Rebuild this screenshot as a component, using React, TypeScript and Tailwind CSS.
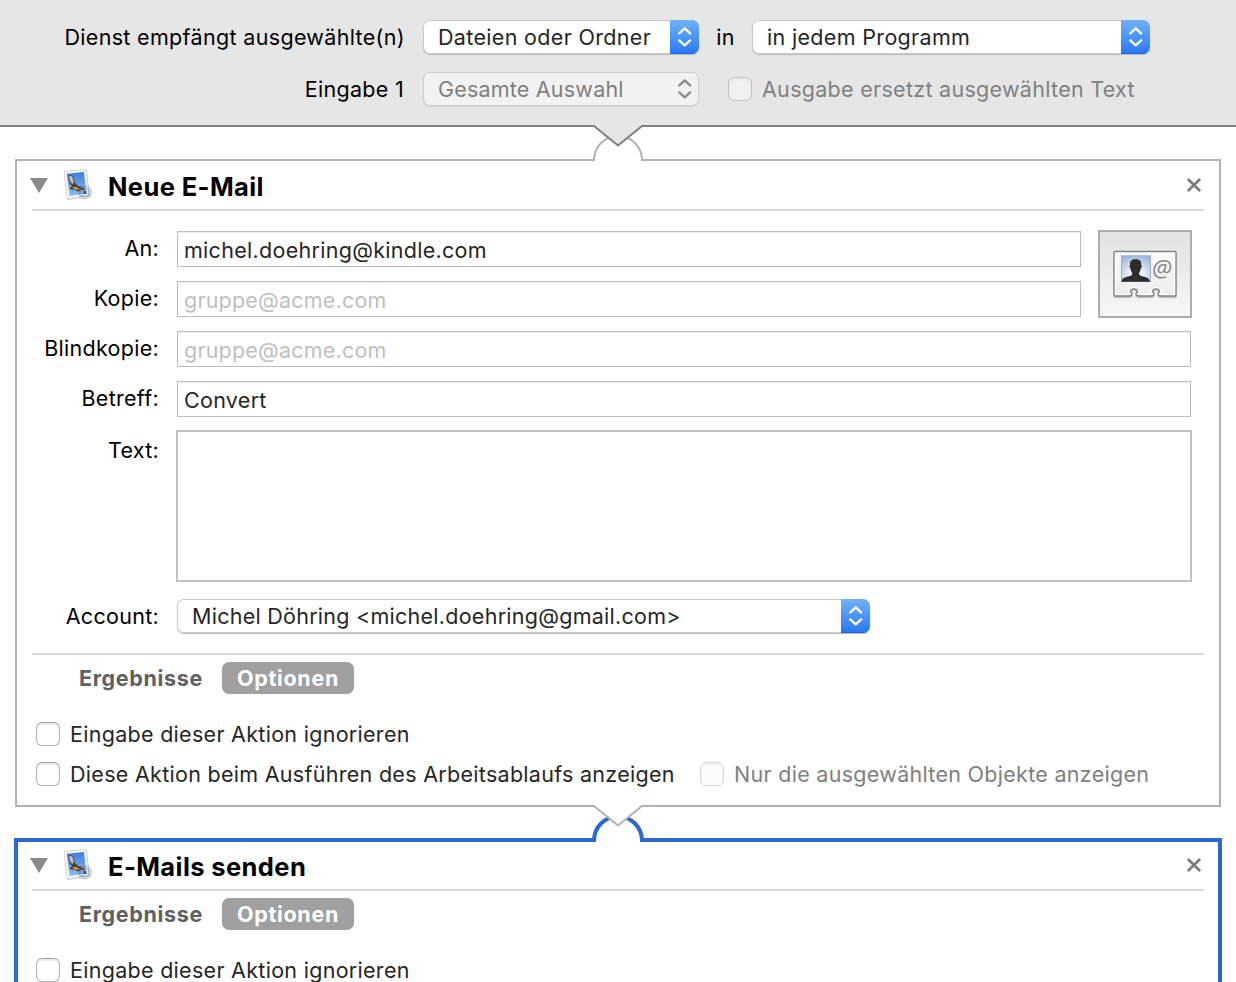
import type { ReactNode } from 'react';

function Chevrons({ className }: { className: string }) {
  return (
    <svg className={className} width="14" height="22" viewBox="0 0 14 22" fill="none" stroke="currentColor" strokeWidth="2.3" strokeLinecap="round" strokeLinejoin="round">
      <path d="M1.300 7.400 6.700 2.400l5.400 5" />
      <path d="M1.300 14.400 6.700 19.400l5.400-5" />
    </svg>
  );
}

function Select({ children, className, disabled = false }: { children: ReactNode; className: string; disabled?: boolean }) {
  return (
    <div
      className={`flex h-[34px] shrink-0 items-stretch overflow-hidden rounded-[7px] ${
        disabled
          ? 'bg-[#f2f2f2] text-[#7f7f7f] shadow-[inset_0_0_0_1px_#cdcdcd,0_1px_1px_#d2d2d2]'
          : 'bg-white text-[#262626] shadow-[inset_0_0_0_1px_#c9c9c9,0_1px_1px_#b9b9b9]'
      } ${className}`}
    >
      <div className="flex flex-1 items-center whitespace-nowrap pl-[15px]">{children}</div>
      <div
        className={`flex w-[29px] items-center justify-center ${
          disabled ? '' : 'bg-linear-to-b from-[#70b1f7] to-[#2777f6] shadow-[inset_0_-1px_0_#1f62dc]'
        }`}
      >
        <Chevrons className={disabled ? 'text-[#8a8a8a]' : 'text-white'} />
      </div>
    </div>
  );
}

function Checkbox({ children, className = '', tone = 'normal' }: { children: ReactNode; className?: string; tone?: 'normal' | 'faded' | 'header' }) {
  const box = {
    normal: 'border-[#b4b4b4] border-t-[#9c9c9c] bg-white shadow-[inset_0_2px_2px_#ececec]',
    faded: 'border-[#d6d6d6] bg-[#fcfcfc] shadow-[inset_0_2px_3px_#efefef]',
    header: 'border-[#c4c4c4] bg-[#f1f1f1] shadow-[inset_0_2px_3px_#e4e4e4]',
  }[tone];
  return (
    <div className={`flex h-6 items-center whitespace-nowrap ${tone === 'normal' ? 'text-[#262626]' : 'text-[#808080]'} ${className}`}>
      <span className={`mr-[10px] size-6 shrink-0 rounded-[6px] border ${box}`} />
      {children}
    </div>
  );
}

function Connector({ selected = false, fromHeader = false }: { selected?: boolean; fromHeader?: boolean }) {
  return (
    <svg className={`absolute left-1/2 z-10 -translate-x-1/2 ${selected ? '-top-[37px]' : '-top-[36px]'}`} width="60" height="40" viewBox="0 0 60 40" fill="none">
      {selected ? (
        <>
          <path d="M6 37v-1.500a24 24 0 0 1 48 0V37Z" fill="#fff" />
          <path d="M6 37v-1.500a24 24 0 0 1 48 0V37" stroke="#2a69d2" strokeWidth="4" />
        </>
      ) : (
        <>
          <path d="M6 36v-1a24 24 0 0 1 48 0v1Z" fill="#fff" />
          <path d="M6 36v-1a24 24 0 0 1 48 0v1" stroke="#b2b2b2" strokeWidth="2" />
        </>
      )}
      <path d="M6 0H54V1L30 20.500 6 1Z" fill={fromHeader ? '#e6e6e6' : '#fff'} />
      <path d="M5 1h1l24 19.500L54 1h1" stroke={fromHeader ? '#808080' : '#b2b2b2'} strokeWidth="2" />
    </svg>
  );
}

function MailIcon() {
  return (
    <svg width="34" height="36" viewBox="2 -0.5 34 36">
      <defs>
        <linearGradient id="sky" x1="0" y1="0" x2="0" y2="1">
          <stop offset="0" stopColor="#3c7ddb" />
          <stop offset="1" stopColor="#8cc0f5" />
        </linearGradient>
      </defs>
      <path d="M4.500 5.500 26.500 3 30.200 28.800 7.800 32.600Z" fill="#9a9a9a" opacity=".45" />
      <path d="M4 3.900 26.200 2l2.900 26L7.300 31.500Z" fill="#f7f7f7" stroke="#bcbcbc" strokeWidth=".9" strokeDasharray="1.600 .7" />
      <path d="M6.800 6.300 23.900 4.600l2.700 21.500L9.600 28.600Z" fill="url(#sky)" />
      <path d="M8.700 8c2.300-.5 4.200.2 5 2.400l1 4.800 3.800 3.600c3 .2 5.700 1.600 6.900 3.400l-4.300.6-2.700 1.500-4.400-2.200c-2 .3-3.600-.2-4.300-1.400l2.500-1.900c-2.800-2.800-4-6.400-3.500-10.800Z" fill="#4a3f34" />
      <path d="M9.300 8.600c1.800-.3 3.200.5 3.600 2.300l.8 4-1.600 1.500C9.900 14.200 9 11.600 9.300 8.600Z" fill="#cbc5b8" />
      <path d="m12 20.400 3-1.400 4.600 2.200-3.200 1.400Z" fill="#c9984b" />
      <g fill="none" stroke="#66788f" strokeWidth=".8" opacity=".6">
        <circle cx="25" cy="25" r="6.300" fill="#8193aa" fillOpacity=".25" />
        <circle cx="25" cy="25" r="4.200" />
        <path d="M18 22.500c3-2 4 2 7 0M18 25.500c3-2 4 2 7 0M19 28.500c3-2 4 2 7 0" />
      </g>
      <path d="M23.500 23.500h3v3h-3z" fill="#2d5c9c" />
    </svg>
  );
}

const CARD =
  'M5 5.500H65q1 0 1 1V49q0 1-1 1H51q-3 0-3-2.200 0-1.300 1.600-1.600c0-2-1.600-3.400-3.600-3.400s-3.600 1.400-3.600 3.400q1.600.3 1.600 1.600 0 2.200-3 2.200H29q-3 0-3-2.200 0-1.300 1.600-1.600c0-2-1.600-3.400-3.600-3.400s-3.600 1.400-3.600 3.400q1.600.3 1.600 1.600 0 2.200-3 2.200H5q-1 0-1-1V6.500q0-1 1-1Z';

function ContactIcon() {
  return (
    <svg width="70" height="56" viewBox="0 0 70 56">
      <defs>
        <radialGradient id="portrait" cx=".5" cy=".75" r=".8">
          <stop offset="0" stopColor="#fff" />
          <stop offset=".45" stopColor="#dce6f5" />
          <stop offset="1" stopColor="#9db3db" />
        </radialGradient>
        <linearGradient id="card" x1="0" y1="0" x2="0" y2="1">
          <stop offset="0" stopColor="#fbfbfb" />
          <stop offset="1" stopColor="#ececec" />
        </linearGradient>
        <clipPath id="inside">
          <path d={CARD} />
        </clipPath>
      </defs>
      <path d={CARD} fill="#777" stroke="#777" strokeWidth="1.500" opacity=".35" transform="translate(0 1.500)" />
      <path d={CARD} fill="url(#card)" stroke="#fff" strokeWidth="4" clipPath="url(#inside)" />
      <path d={CARD} fill="none" stroke="#808080" strokeWidth="1.300" />
      <rect x="11.500" y="9.800" width="29" height="25.700" fill="url(#portrait)" stroke="#9db0d4" />
      <path transform="translate(0 1.300)" d="M11.500 34.500c.2-3.400 3-4.500 8.500-5.800 1.500-.4 2.300-1 2.200-3.300-1-1-1.500-2.600-1.700-4.400-1.100-.3-1.300-2.700-.4-3.300-.5-3.700 1.500-5.700 5.400-5.700 4.200 0 6.200 2 5.700 5.700.9.500.7 3-.4 3.300-.2 1.900-.8 3.500-1.700 4.500-.1 2 .6 2.800 2.200 3.200 5.500 1.300 8.500 2.400 8.700 5.800Z" fill="#2c2c2c" />
      <text x="42" y="30.500" className="font-['Open_Sans'] text-[23.500px] tracking-normal italic" fill="#8b8b8b">@</text>
    </svg>
  );
}

function ActionHeader({ title }: { title: string }) {
  return (
    <div className="mx-auto flex h-[50px] w-[1172px] items-start border-b-2 border-[#d8d8d8]">
      <svg className="mt-[17px] -ml-[2px]" width="18" height="15" viewBox="0 0 18 15">
        <path d="M0 0h18L9 15Z" fill="#8a8a8a" />
      </svg>
      <div className="mt-[6px] ml-[14px] w-[34px]">
        <MailIcon />
      </div>
      <h2 className="mt-[10px] ml-[12px] flex-1 text-[25.500px] leading-[32px] font-bold tracking-[0.4px] text-black">{title}</h2>
      <svg className="mt-[17px] mr-[3px]" width="14" height="14" viewBox="0 0 14 14" stroke="#7d7d7d" strokeWidth="2.800" strokeLinecap="round">
        <path d="m1.700 1.700 10.600 10.600M12.300 1.700 1.700 12.300" />
      </svg>
    </div>
  );
}

function Tabs({ className }: { className: string }) {
  return (
    <div className={`mt-[7px] flex h-8 items-center text-[21.500px] font-bold tracking-[0.66px] ${className}`}>
      <span className="w-[143px] text-[#606060]">Ergebnisse</span>
      <span className="flex h-8 w-[132px] items-center justify-center rounded-[7px] bg-[#a0a0a0] text-white">Optionen</span>
    </div>
  );
}

function Label({ children, className = 'h-9' }: { children: ReactNode; className?: string }) {
  return <div className={`flex w-[142px] shrink-0 items-center justify-end text-black ${className}`}>{children}</div>;
}

function Field({ children, className, placeholder = false }: { children: ReactNode; className: string; placeholder?: boolean }) {
  return (
    <div
      className={`flex h-9 items-center border border-[#bdbdbd] bg-white pt-[2px] pl-[6px] shadow-[inset_0_1px_0_#f0f0f0] ${
        placeholder ? 'tracking-[0.2px] text-[#bfbfbf]' : 'text-[#262626]'
      } ${className}`}
    >
      {children}
    </div>
  );
}

export default function App() {
  return (
    <div className="h-[982px] w-[1236px] overflow-hidden bg-white font-['Inter','Liberation_Sans',sans-serif] text-[21.500px] leading-[28px] tracking-[0.29px]">
      <header className="h-[127px] border-b-2 border-[#808080] bg-[#e6e6e6] pt-5 text-black">
        <div className="flex items-center">
          <div className="w-[405px] text-right tracking-[0.33px] whitespace-nowrap">Dienst empfängt ausgewählte(n)</div>
          <Select className="ml-[18px] w-[276px] tracking-[0.33px]">Dateien oder Ordner</Select>
          <div className="w-[53px] text-center">in</div>
          <Select className="w-[398px] tracking-[0.33px]">in jedem Programm</Select>
        </div>
        <div className="mt-[18px] flex items-center">
          <div className="w-[405px] pr-px text-right">Eingabe 1</div>
          <Select className="ml-[18px] w-[276px] tracking-[0.2px]" disabled>Gesamte Auswahl</Select>
          <Checkbox className="ml-[29px]" tone="header">Ausgabe ersetzt ausgewählten Text</Checkbox>
        </div>
      </header>

      <section className="relative mx-[15px] mt-8 h-[648px] border-2 border-[#b2b2b2]">
        <Connector fromHeader />
        <ActionHeader title="Neue E-Mail" />
        <div className="mt-5 flex flex-col gap-[14px]">
          <div className="flex">
            <div className="flex flex-col gap-[14px]">
              <div className="flex">
                <Label className="h-[34px]">An:</Label>
                <Field className="ml-[18px] w-[904px]">michel.doehring@kindle.com</Field>
              </div>
              <div className="flex">
                <Label className="h-[34px]">Kopie:</Label>
                <Field className="ml-[18px] w-[904px]" placeholder>gruppe@acme.com</Field>
              </div>
            </div>
            <div className="-mt-px ml-[17px] -mb-px flex h-[88px] w-[94px] items-center justify-center border-2 border-[#adadad] bg-linear-to-b from-[#e2e2e2] to-[#f7f7f7]">
              <ContactIcon />
            </div>
          </div>
          <div className="flex">
            <Label className="h-[34px]">Blindkopie:</Label>
            <Field className="ml-[18px] w-[1014px]" placeholder>gruppe@acme.com</Field>
          </div>
          <div className="flex">
            <Label className="h-[34px]">Betreff:</Label>
            <Field className="ml-[18px] w-[1014px]">Convert</Field>
          </div>
        </div>
        <div className="mt-[13px] flex">
          <Label className="h-10">Text:</Label>
          <div className="ml-[17px] h-[152px] w-[1016px] border-2 border-[#c2c2c2]" />
        </div>
        <div className="mt-[17px] flex">
          <Label className="h-[34px]">Account:</Label>
          <Select className="ml-[18px] w-[693px] tracking-[0.26px]">Michel Döhring &lt;michel.doehring@gmail.com&gt;</Select>
        </div>
        <div className="mx-auto mt-5 h-[2px] w-[1172px] bg-[#d8d8d8]" />
        <Tabs className="pl-[62px]" />
        <div className="mt-7 pl-[19px]">
          <Checkbox>Eingabe dieser Aktion ignorieren</Checkbox>
          <div className="mt-4 flex">
            <Checkbox className="w-[664px]">Diese Aktion beim Ausführen des Arbeitsablaufs anzeigen</Checkbox>
            <Checkbox tone="faded">Nur die ausgewählten Objekte anzeigen</Checkbox>
          </div>
        </div>
      </section>

      <section className="relative mx-[14px] mt-[31px] h-[220px] border-4 border-[#2a69d2]">
        <Connector selected />
        <div className="-mt-px">
          <ActionHeader title="E-Mails senden" />
        </div>
        <Tabs className="pl-[61px]" />
        <div className="mt-7 pl-[18px]">
          <Checkbox>Eingabe dieser Aktion ignorieren</Checkbox>
        </div>
      </section>
    </div>
  );
}
